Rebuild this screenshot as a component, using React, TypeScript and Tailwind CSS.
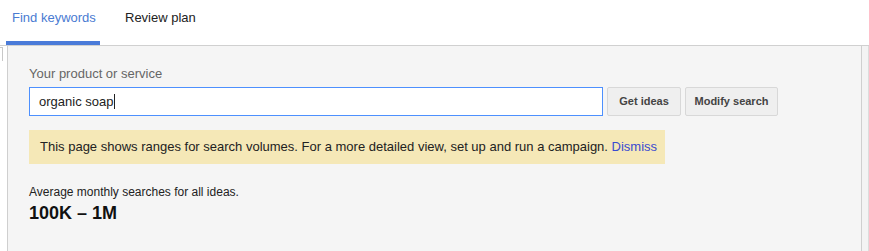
import React from 'react';

export default function App() {
  return (
    <div className="w-[869px] h-[251px] overflow-hidden bg-white font-['Liberation_Sans',Arial,sans-serif] text-[#222]">
      {/* Tabs */}
      <div className="flex h-[46px] border-b border-[#d0d0d0]">
        <div className="ml-[6px] w-[94px] flex flex-col">
          <div className="flex-1 flex items-center pl-[6px] pb-[6px] text-[13px] text-[#4a7bd2]">Find keywords</div>
          <div className="h-[4px] bg-[#4a7bd9]" />
        </div>
        <div className="ml-[25px] flex items-center pb-[10px] text-[13px] text-[#222]">Review plan</div>
      </div>

      <div className="flex h-[205px]">
        {/* tiny left stub */}
        <div className="w-[7px] flex flex-col">
          <div className="w-[3px] h-[14px] border-t border-r border-[#c8c8c8] mt-[1px]" />
        </div>

        {/* Main panel */}
        <div className="w-[855px] bg-[#f5f5f5] border-l border-r border-[#cfcfcf] pl-[21px] pt-[20px]">
          <div className="text-[13px] text-[#666] leading-[16px]">Your product or service</div>
          <div className="flex mt-[5px] gap-[4px]">
            <div className="w-[574px] h-[29px] bg-white border border-[#4d90fe] flex items-center pl-[9px] text-[13px] text-[#222]">
              organic soap<span className="inline-block w-[1px] h-[15px] bg-[#222] ml-[1px]" />
            </div>
            <button className="w-[74px] h-[29px] rounded-[2px] border border-[#d8d8d8] bg-[#efefef] text-[11px] font-bold text-[#444]">Get ideas</button>
            <button className="w-[93px] h-[29px] rounded-[2px] border border-[#d8d8d8] bg-[#efefef] text-[11px] font-bold text-[#444]">Modify search</button>
          </div>
          <div className="mt-[14px] w-[636px] h-[34px] bg-[#f5e8b7] flex items-center pl-[11px] text-[13px] text-[#222]">
            This page shows ranges for search volumes. For a more detailed view, set up and run a campaign.&nbsp;<span className="text-[#3a4bd0]">Dismiss</span>
          </div>
          <div className="mt-[21px] text-[12px] leading-[14px] text-[#222]">Average monthly searches for all ideas.</div>
          <div className="mt-[3px] text-[18px] leading-[22px] font-bold text-[#111]">100K – 1M</div>
        </div>

        <div className="flex-1 bg-[#f3f3f3] border-r border-[#dcdcdc]" />
      </div>
    </div>
  );
}
